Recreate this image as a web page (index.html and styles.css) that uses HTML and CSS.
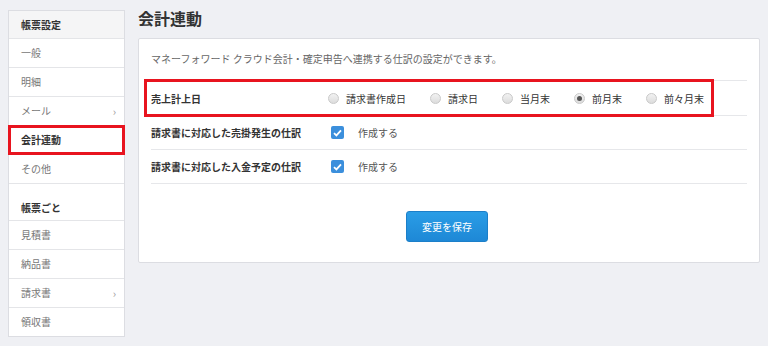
FILE: index.html
```html
<!DOCTYPE html>
<html lang="ja">
<head>
    <meta charset="UTF-8">
    <title>会計連動</title>
    <link rel="stylesheet" href="styles.css">
</head>
<body>
    <div class="layout">
        <nav class="sidebar">
            <div class="side-head">帳票設定</div>
            <a class="side-item">一般</a>
            <a class="side-item">明細</a>
            <a class="side-item has-sub">メール</a>
            <a class="side-item is-current">会計連動</a>
            <a class="side-item">その他</a>
            <div class="side-section">帳票ごと</div>
            <a class="side-item">見積書</a>
            <a class="side-item">納品書</a>
            <a class="side-item has-sub">請求書</a>
            <a class="side-item last">領収書</a>
        </nav>

        <main class="main">
            <h1 class="title">会計連動</h1>
            <div class="card">
                <p class="desc">マネーフォワード クラウド会計・確定申告へ連携する仕訳の設定ができます。</p>

                <div class="row first">
                    <span class="mark"></span>
                    <div class="row-label">売上計上日</div>
                    <div class="options">
                        <label class="opt"><span class="radio"></span>請求書作成日</label>
                        <label class="opt"><span class="radio"></span>請求日</label>
                        <label class="opt"><span class="radio"></span>当月末</label>
                        <label class="opt"><span class="radio checked"></span>前月末</label>
                        <label class="opt"><span class="radio"></span>前々月末</label>
                    </div>
                </div>

                <div class="row">
                    <div class="row-label">請求書に対応した売掛発生の仕訳</div>
                    <label class="opt check-opt">
                        <span class="checkbox">
                            <svg width="9" height="8" viewBox="0 0 9 8"><path d="M1 4.2 L3.4 6.4 L8 1.4" fill="none" stroke="#fff" stroke-width="1.8"/></svg>
                        </span>作成する
                    </label>
                </div>

                <div class="row">
                    <div class="row-label">請求書に対応した入金予定の仕訳</div>
                    <label class="opt check-opt">
                        <span class="checkbox">
                            <svg width="9" height="8" viewBox="0 0 9 8"><path d="M1 4.2 L3.4 6.4 L8 1.4" fill="none" stroke="#fff" stroke-width="1.8"/></svg>
                        </span>作成する
                    </label>
                </div>

                <div class="actions">
                    <button class="save-button">変更を保存</button>
                </div>
            </div>
        </main>
    </div>
</body>
</html>
```

FILE: styles.css
```css
/* page */
body {
    margin: 0;
    background-color: #eff0f4;
    font-family: "Noto Sans CJK JP", "Noto Sans", sans-serif;
    color: #333;
    font-size: 10px;
}

.layout {
    display: flex;
    align-items: flex-start;
    padding: 10px 8px 0 8px;
    gap: 13px;
}

/* sidebar */
.sidebar {
    width: 115px;
    flex-shrink: 0;
    background: #fff;
    border: 1px solid #dcdde2;
    display: flex;
    flex-direction: column;
}

.side-head {
    height: 28px;
    line-height: 28px;
    padding-left: 12px;
    background: #f5f5f6;
    border-bottom: 1px solid #e4e5e8;
    font-weight: bold;
    color: #333;
    box-sizing: border-box;
}

.side-item {
    height: 29px;
    line-height: 28px;
    padding-left: 12px;
    padding-right: 8px;
    border-bottom: 1px solid #e4e5e8;
    color: #777;
    box-sizing: border-box;
    display: flex;
    justify-content: space-between;
}

.side-item.last {
    border-bottom: none;
    height: 28px;
}

.side-item.has-sub::after {
    content: "›";
    color: #999;
    font-size: 11px;
}

.side-item.is-current {
    font-weight: bold;
    color: #333;
    border: 3px solid #e8141f;
    margin: 0 -1px;
    padding-left: 10px;
    line-height: 23px;
    height: 30px;
    margin-top: -1px;
}

.side-section {
    height: 37px;
    padding: 16px 0 0 12px;
    box-sizing: border-box;
    border-bottom: 1px solid #e4e5e8;
    font-weight: bold;
    color: #333;
}

/* main */
.main {
    flex: 1;
}

.title {
    margin: 0 0 10px 0;
    font-size: 16px;
    line-height: 20px;
    margin-top: -2px;
    color: #333;
}

.card {
    background: #fff;
    border: 1px solid #dcdde2;
    border-radius: 2px;
    padding: 0 12px 20px 12px;
}

.desc {
    margin: 0;
    height: 41px;
    line-height: 40px;
    color: #666;
}

.row {
    position: relative;
    display: flex;
    align-items: center;
    height: 33px;
    border-bottom: 1px solid #e6e7ea;
}

.row.first {
    border-top: 1px solid #e6e7ea;
    height: 34px;
}

.mark {
    position: absolute;
    left: -7px;
    top: -2px;
    width: 570px;
    height: 38px;
    border: 3px solid #e8141f;
    box-sizing: border-box;
}

.row-label {
    width: 180px;
    font-weight: bold;
    color: #333;
}

.options {
    display: flex;
    align-items: center;
    margin-left: -3px;
}

.opt {
    display: flex;
    align-items: center;
    margin-right: 24px;
    color: #333;
}

.radio {
    width: 9px;
    height: 9px;
    border-radius: 50%;
    border: 1px solid #c9c9c9;
    background: linear-gradient(#f2f2f2, #dcdcdc);
    margin-right: 7px;
    position: relative;
}

.radio.checked::after {
    content: "";
    position: absolute;
    left: 2px;
    top: 2px;
    width: 5px;
    height: 5px;
    border-radius: 50%;
    background: #555;
}

.check-opt {
    color: #555;
}

.checkbox {
    width: 13px;
    height: 13px;
    border-radius: 2px;
    background: #3b8fdc;
    margin-right: 14px;
    display: flex;
    align-items: center;
    justify-content: center;
}

.actions {
    display: flex;
    justify-content: center;
    padding-top: 27px;
}

.save-button {
    width: 82px;
    height: 31px;
    border: 1px solid #1c7fc9;
    border-radius: 3px;
    background: linear-gradient(#2a9de6, #1e88d6);
    color: #fff;
    font-family: inherit;
    font-size: 10px;
    margin-left: -4px;
}
```
